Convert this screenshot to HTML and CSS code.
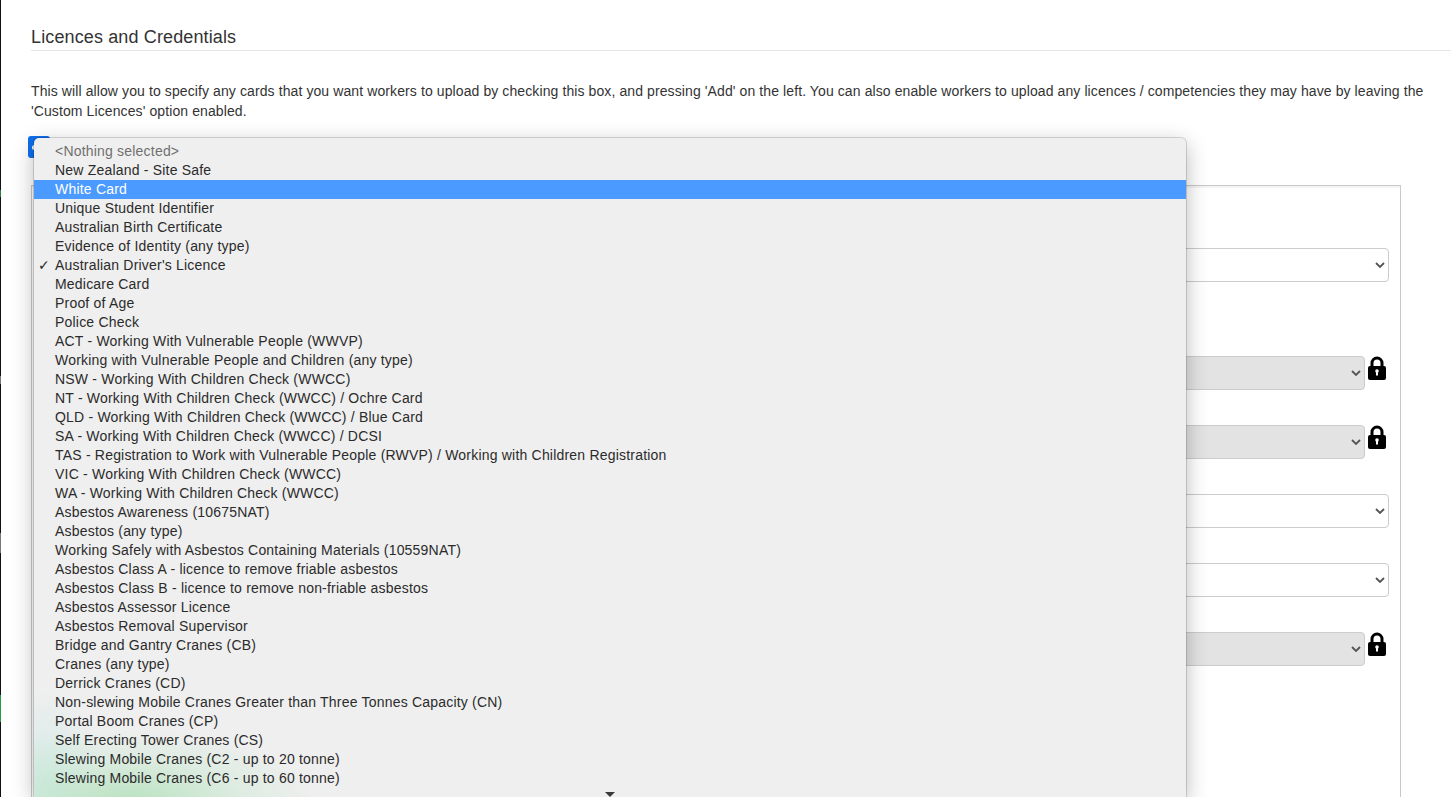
FILE: index.html
```html
<!DOCTYPE html>
<html lang="en">
<head>
<meta charset="utf-8">
<title>Licences and Credentials</title>
<link rel="stylesheet" href="styles.css">
</head>
<body>
<div class="edge"></div>
<main class="page">
  <h2 class="title">Licences and Credentials</h2>
  <p class="intro">This will allow you to specify any cards that you want workers to upload by checking this box, and pressing 'Add' on the left. You can also enable workers to upload any licences / competencies they may have by leaving the 'Custom Licences' option enabled.</p>
  <div class="checkbox"><span class="checkmark"></span></div>
  <section class="panel">
    <div class="row row-first"><div class="select"><svg class="chev" viewBox="0 0 10 6"><path d="M1 1l4 4 4-4"/></svg></div></div>
    <div class="row row-gap"><div class="select locked"><svg class="chev" viewBox="0 0 10 6"><path d="M1 1l4 4 4-4"/></svg></div><svg class="lock" viewBox="0 0 18 24"><path d="M4 11V7a5 5 0 0 1 10 0v4" class="shackle"/><rect y="10" width="18" height="14" rx="2"/><circle class="hole" cx="9" cy="15" r="1.8"/><rect class="hole" x="8" y="15" width="2" height="4.5"/></svg></div>
    <div class="row"><div class="select locked"><svg class="chev" viewBox="0 0 10 6"><path d="M1 1l4 4 4-4"/></svg></div><svg class="lock" viewBox="0 0 18 24"><path d="M4 11V7a5 5 0 0 1 10 0v4" class="shackle"/><rect y="10" width="18" height="14" rx="2"/><circle class="hole" cx="9" cy="15" r="1.8"/><rect class="hole" x="8" y="15" width="2" height="4.5"/></svg></div>
    <div class="row"><div class="select"><svg class="chev" viewBox="0 0 10 6"><path d="M1 1l4 4 4-4"/></svg></div></div>
    <div class="row"><div class="select"><svg class="chev" viewBox="0 0 10 6"><path d="M1 1l4 4 4-4"/></svg></div></div>
    <div class="row"><div class="select locked"><svg class="chev" viewBox="0 0 10 6"><path d="M1 1l4 4 4-4"/></svg></div><svg class="lock" viewBox="0 0 18 24"><path d="M4 11V7a5 5 0 0 1 10 0v4" class="shackle"/><rect y="10" width="18" height="14" rx="2"/><circle class="hole" cx="9" cy="15" r="1.8"/><rect class="hole" x="8" y="15" width="2" height="4.5"/></svg></div>
  </section>
</main>
<ul class="menu">
  <li class="muted">&lt;Nothing selected&gt;</li>
  <li>New Zealand - Site Safe</li>
  <li class="active">White Card</li>
  <li>Unique Student Identifier</li>
  <li>Australian Birth Certificate</li>
  <li>Evidence of Identity (any type)</li>
  <li class="checked">Australian Driver's Licence</li>
  <li>Medicare Card</li>
  <li>Proof of Age</li>
  <li>Police Check</li>
  <li>ACT - Working With Vulnerable People (WWVP)</li>
  <li>Working with Vulnerable People and Children (any type)</li>
  <li>NSW - Working With Children Check (WWCC)</li>
  <li>NT - Working With Children Check (WWCC) / Ochre Card</li>
  <li>QLD - Working With Children Check (WWCC) / Blue Card</li>
  <li>SA - Working With Children Check (WWCC) / DCSI</li>
  <li>TAS - Registration to Work with Vulnerable People (RWVP) / Working with Children Registration</li>
  <li>VIC - Working With Children Check (WWCC)</li>
  <li>WA - Working With Children Check (WWCC)</li>
  <li>Asbestos Awareness (10675NAT)</li>
  <li>Asbestos (any type)</li>
  <li>Working Safely with Asbestos Containing Materials (10559NAT)</li>
  <li>Asbestos Class A - licence to remove friable asbestos</li>
  <li>Asbestos Class B - licence to remove non-friable asbestos</li>
  <li>Asbestos Assessor Licence</li>
  <li>Asbestos Removal Supervisor</li>
  <li>Bridge and Gantry Cranes (CB)</li>
  <li>Cranes (any type)</li>
  <li>Derrick Cranes (CD)</li>
  <li>Non-slewing Mobile Cranes Greater than Three Tonnes Capacity (CN)</li>
  <li>Portal Boom Cranes (CP)</li>
  <li>Self Erecting Tower Cranes (CS)</li>
  <li>Slewing Mobile Cranes (C2 - up to 20 tonne)</li>
  <li>Slewing Mobile Cranes (C6 - up to 60 tonne)</li>
  <li class="more"></li>
</ul>
</body>
</html>
```
FILE: styles.css
```css
* { box-sizing: border-box; }
html, body { margin: 0; height: 797px; overflow: hidden; background: #fff; }
body { font-family: "Liberation Sans", Arial, sans-serif; color: #333; position: relative; }

.edge {
  position: absolute; left: 0; top: 0; bottom: 0; width: 1px;
  background: linear-gradient(to bottom,
    #111 0, #111 190px, #2a7d3e 190px, #2a7d3e 197px, #111 197px,
    #111 376px, #777 376px, #777 384px, #111 384px,
    #111 533px, #777 533px, #777 553px, #111 553px,
    #111 695px, #2a9a4a 695px, #2a9a4a 722px, #111 722px);
}

.page { padding: 24px 0 0 31px; }
.title {
  margin: 0; height: 27px; line-height: 26px;
  font-size: 18px; font-weight: 400; color: #333; letter-spacing: 0.13px;
  border-bottom: 1px solid #e6e6e6;
}
.intro {
  margin: 30px 20px 0 0; font-size: 14px; line-height: 20px; color: #333; letter-spacing: 0.1px;
}
.checkbox {
  width: 22px; height: 22px; margin: 15px 0 0 -3px; padding: 7px 0 0 4px;
  background: #0f6fee; border-radius: 3px;
}
.checkmark { display: block; width: 5px; height: 5px; margin-top: 2px; background: #fff; border-radius: 50%; }

.panel {
  margin: 27px 50px 0 0; height: 640px;
  padding: 62px 11px 0 12px;
  border: 1px solid #c9c9c9; border-bottom: 0;
  box-shadow: inset 0 2px 0 #f4f4f4;
  display: flex; flex-direction: column; gap: 35px;
}
.row { display: flex; align-items: flex-start; gap: 2px; }
.row-gap { margin-top: 39px; }
.select {
  flex: 1; height: 34px; padding-right: 3px;
  display: flex; align-items: center; justify-content: flex-end;
  background: #fff; border: 1px solid #ccc; border-radius: 4px;
}
.select.locked { background: #e3e3e3; }
.chev { width: 10px; height: 6px; fill: none; stroke: #555; stroke-width: 1.8; }
.lock { width: 18px; height: 24px; margin: 0 3px 0 1px; flex: none; }
.lock .shackle { fill: none; stroke: #000; stroke-width: 3; }
.lock .hole { fill: #fff; }

.menu {
  position: absolute; left: 34px; top: 138px; width: 1152px; height: 659px;
  margin: 0; padding: 4px 0 0; list-style: none; overflow: hidden;
  font-size: 14px; line-height: 19px; color: #2b2b2b; letter-spacing: 0.2px;
  background:
    radial-gradient(ellipse 190px 75px at 95px 665px, rgba(160,220,170,.7), rgba(190,230,200,.35) 60%, rgba(239,239,239,0) 100%),
    radial-gradient(ellipse 60px 90px at 10px 640px, rgba(195,232,225,.6), rgba(239,239,239,0) 100%),
    #efefef;
  border-radius: 5px 5px 0 0;
  box-shadow: 0 0 0 1px rgba(0,0,0,.14), 0 6px 22px rgba(0,0,0,.28);
}
.menu li { height: 19px; padding-left: 21px; white-space: nowrap; position: relative; }
.menu .muted { color: #6f6f6f; }
.menu .active { background: #4a9aff; color: #fff; }
.menu .checked::before { content: "\2713"; position: absolute; left: 4px; top: 0; font-weight: 700; font-family: "DejaVu Sans", sans-serif; font-size: 14px; }
.menu .more {
  position: absolute; left: 571px; bottom: 0; width: 0; height: 0; padding: 0;
  border-left: 5px solid transparent; border-right: 5px solid transparent; border-top: 5px solid #3a3a3a;
}
```
